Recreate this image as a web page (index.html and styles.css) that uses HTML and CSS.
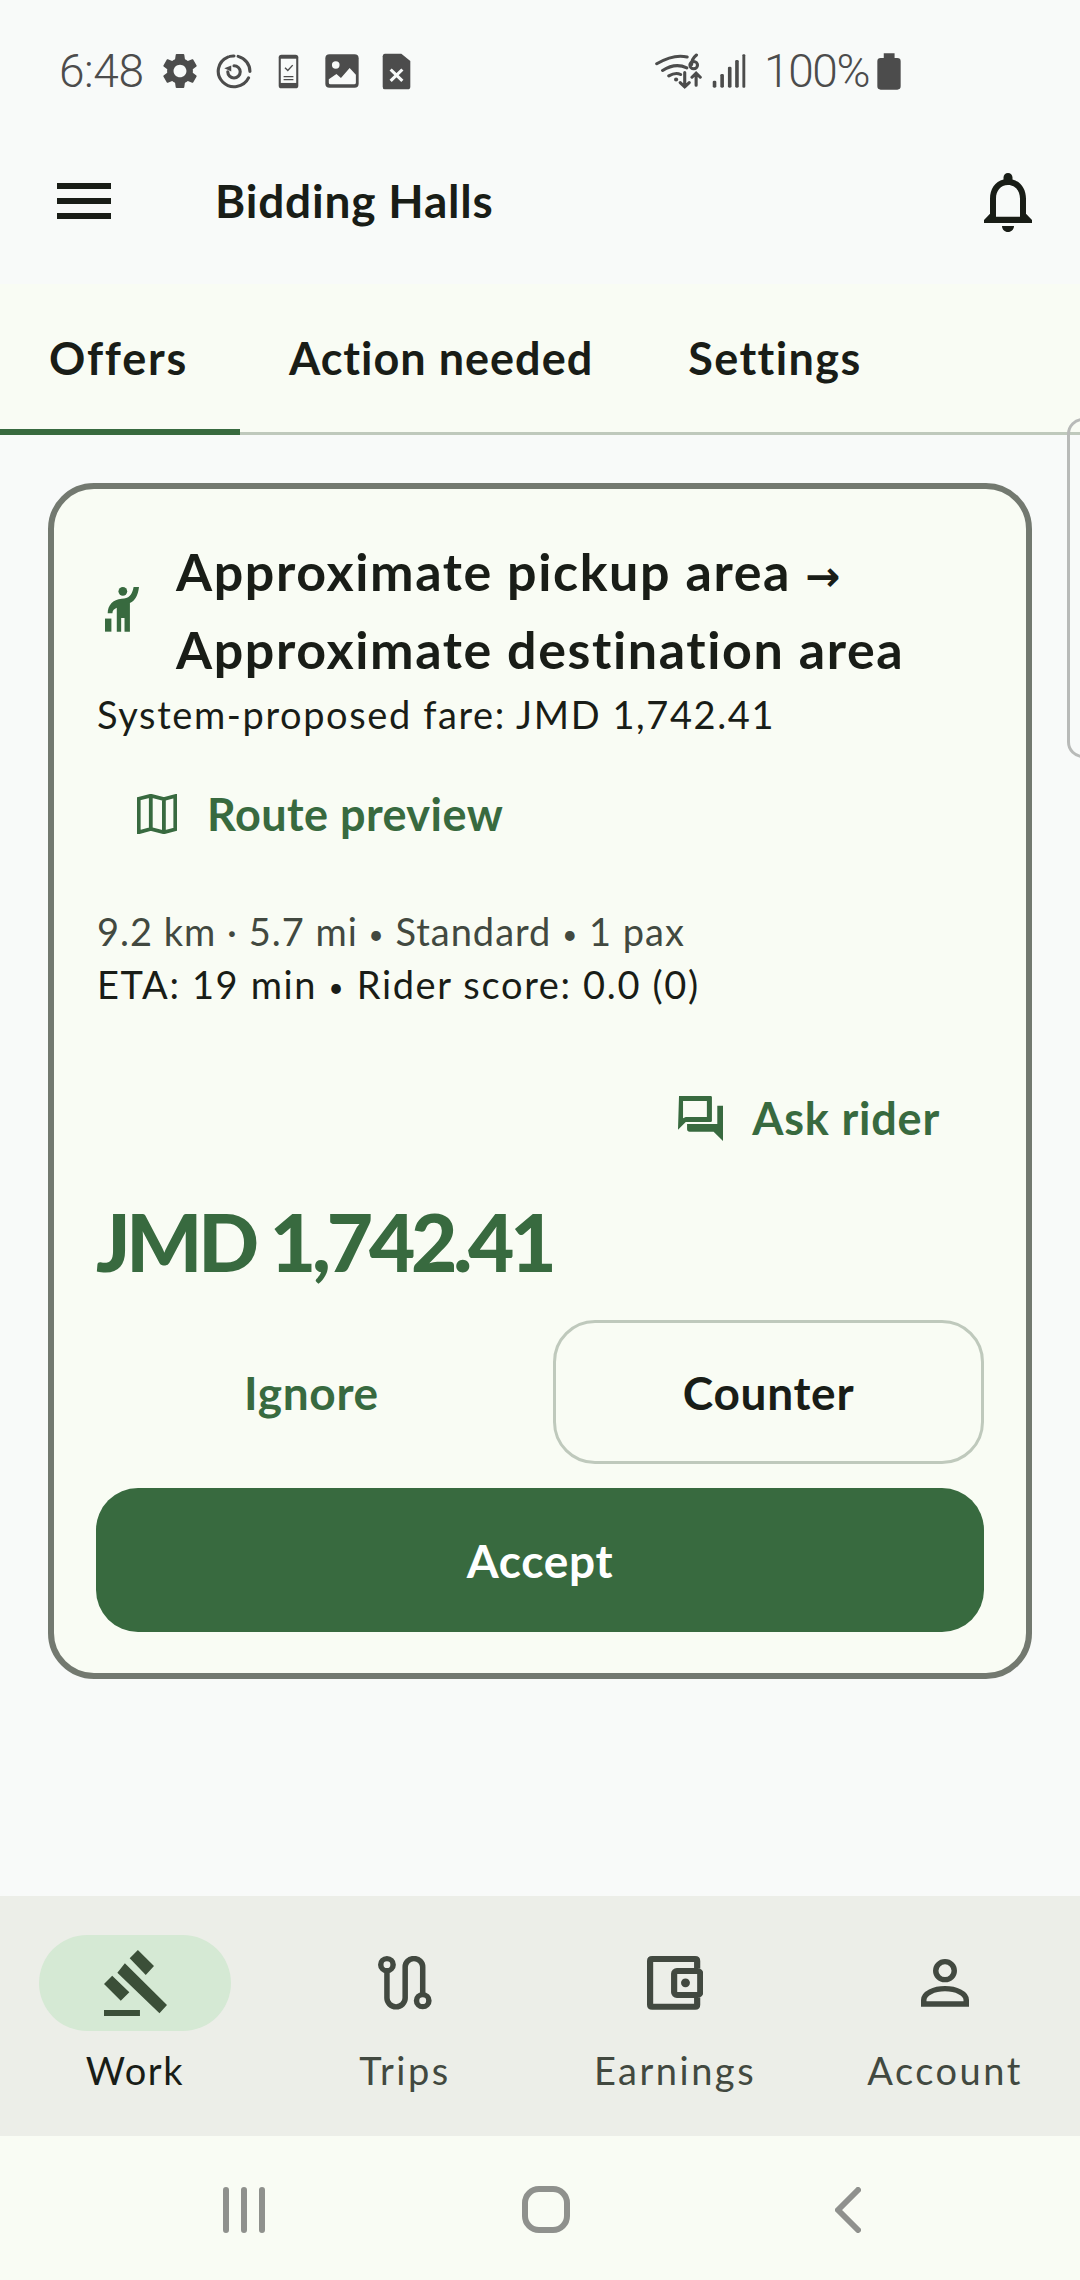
FILE: index.html
```html
<!DOCTYPE html>
<html lang="en">
<head>
<meta charset="utf-8">
<title>Bidding Halls</title>
<link rel="stylesheet" href="styles.css">
</head>
<body>
<div class="app">
  <div class="status">
    <div class="status-left">
      <span class="clock">6:48</span>
      <svg class="si gear" viewBox="2.5 1.8 19 20.4" preserveAspectRatio="none"><path class="dk" d="M19.14 12.94c.04-.3.06-.61.06-.94 0-.32-.02-.64-.07-.94l2.03-1.58c.18-.14.23-.41.12-.61l-1.92-3.32c-.12-.22-.37-.29-.59-.22l-2.39.96c-.5-.38-1.03-.7-1.62-.94l-.36-2.54c-.04-.24-.24-.41-.48-.41h-3.84c-.24 0-.43.17-.47.41l-.36 2.54c-.59.24-1.13.57-1.62.94l-2.39-.96c-.22-.08-.47 0-.59.22L2.74 8.87c-.12.21-.08.47.12.61l2.03 1.58c-.05.3-.09.63-.09.94s.02.64.07.94l-2.03 1.58c-.18.14-.23.41-.12.61l1.92 3.32c.12.22.37.29.59.22l2.39-.96c.5.38 1.03.7 1.62.94l.36 2.54c.05.24.24.41.48.41h3.84c.24 0 .44-.17.47-.41l.36-2.54c.59-.24 1.13-.56 1.62-.94l2.39.96c.22.08.47 0 .59-.22l1.92-3.32c.12-.22.07-.47-.12-.61l-2.01-1.58zM12 15.6c-1.98 0-3.6-1.62-3.6-3.6s1.62-3.6 3.6-3.6 3.6 1.62 3.6 3.6-1.62 3.6-3.6 3.6z"/></svg>
      <svg class="si sync" viewBox="628 164 104 104" preserveAspectRatio="none"><path class="ln" d="M668 171a46 46 0 0 1 12-1M692 171a46 46 0 0 1 34 45M722 235a46 46 0 1 1-60-62"/><path class="ln" d="M680 199a18 18 0 1 1-18 18"/><path class="dk" d="M652 206l20-8v18z"/></svg>
      <svg class="si phone" viewBox="806 164 60 104" preserveAspectRatio="none"><rect class="dk" x="808" y="166" width="56" height="100" rx="8"/><rect class="lt" x="814" y="178" width="44" height="72"/><path class="ln thin" d="M826 205l8 8 14-16"/><path class="ln thin" d="M822 231h28M822 240h28"/></svg>
      <svg class="si image" viewBox="944 164 98 102" preserveAspectRatio="none"><rect class="dk" x="945" y="165" width="96" height="100" rx="12"/><circle class="lt" cx="975" cy="197" r="11"/><path class="lt" d="M955 240l22-16 13 12 25-30 18 20v24q0 5-5 5h-68q-5 0-5-5z"/></svg>
      <svg class="si file" viewBox="1108 160 84 110" preserveAspectRatio="none"><path class="dk" d="M1116 162h48l26 22v76q0 8-8 8h-66q-6 0-6-8v-90q0-8 6-8z"/><path class="lnw" d="M1133 209l34 34M1167 209l-34 34"/></svg>
    </div>
    <div class="status-right">
      <svg class="si wifi" viewBox="340 160 136 110" preserveAspectRatio="none"><path class="ln" d="M345 192q50-30 88-20M362 212q36-24 70-8M380 228q20-12 34-4"/><circle class="dk" cx="401" cy="239" r="6"/><path class="ln" d="M426 218v42M413 248l13 13 13-13M459 256v-36M447 232l12-12 12 12"/><path class="ln" d="M460 166q-14 12-14 28"/><circle class="ln" cx="452" cy="196" r="11"/></svg>
      <svg class="si signal" viewBox="505 160 94 102" preserveAspectRatio="none"><rect class="dk" x="507" y="240" width="10" height="21" rx="4"/><rect class="dk" x="528" y="220" width="10" height="41" rx="4"/><rect class="dk" x="549" y="198" width="10" height="63" rx="4"/><rect class="dk" x="569" y="178" width="10" height="83" rx="4"/><rect class="dk" x="589" y="161" width="8" height="100" rx="3"/></svg>
      <span class="batt-text">100%</span>
      <svg class="si batt" viewBox="978 157 71 111" preserveAspectRatio="none"><path class="dk" d="M998 158h32v14h8q10 0 10 10v75q0 10-10 10h-49q-10 0-10-10v-75q0-10 10-10h9z"/></svg>
    </div>
  </div>

  <header class="topbar">
    <svg class="menu" viewBox="0 0 54 36"><path d="M0 0h54v6H0zM0 15h54v6H0zM0 30h54v6H0z"/></svg>
    <h1 class="title">Bidding Halls</h1>
    <svg class="bell" viewBox="4 2.5 16 19.5" preserveAspectRatio="none"><path d="M12 22c1.1 0 2-.9 2-2h-4c0 1.1.9 2 2 2zm6-6v-5c0-3.07-1.63-5.64-4.5-6.32V4c0-.83-.67-1.5-1.5-1.5s-1.5.67-1.5 1.5v.68C7.64 5.36 6 7.92 6 11v5l-2 2v1h16v-1l-2-2zm-2 1H8v-6c0-2.48 1.51-4.5 4-4.5s4 2.02 4 4.5v6z"/></svg>
  </header>

  <nav class="tabs">
    <div class="tab active">Offers</div>
    <div class="tab">Action needed</div>
    <div class="tab">Settings</div>
  </nav>

  <div class="peek"></div>

  <main class="content">
    <article class="card">
      <div class="route">
        <svg class="hail" viewBox="75 170 101 134" preserveAspectRatio="none"><circle cx="128" cy="183" r="13"/><path d="M83 248C83 225 98 207 125 205C145 205 155 195 160 170H176C173 195 165 210 149 218V303H133V262H123V303H110V232C103 235 97 240 97 248Z"/><rect x="75" y="264" width="19" height="39"/></svg>
        <h2 class="route-title">Approximate pickup area <span class="arrow">→</span><br>Approximate destination area</h2>
      </div>
      <p class="fare">System-proposed fare: JMD 1,742.41</p>
      <div class="preview">
        <svg class="map" viewBox="397 98 116 120" preserveAspectRatio="none"><path d="M402 112L437 103L475 113L508 104V204L475 213L437 203L402 213ZM437 103V203M475 113V213"/></svg>
        <span class="link">Route preview</span>
      </div>
      <div class="stats">
        <p class="muted">9.2 km · 5.7 mi <span class="dot">•</span> Standard <span class="dot">•</span> 1 pax</p>
        <p class="strong">ETA: 19 min <span class="dot">•</span> Rider score: 0.0 (0)</p>
      </div>
      <div class="ask">
        <svg class="chat" viewBox="173 108 134 135" preserveAspectRatio="none"><path fill-rule="evenodd" d="M176 108H270q4 0 4 4V182q0 4-4 4H196L173 209ZM188 123V175l8-4H259V123Z"/><path d="M290 137h17v106l-28-28h-71q-8 0-8-8v-15h90z"/></svg>
        <span class="link">Ask rider</span>
      </div>
      <div class="price">JMD 1,742.41</div>
      <div class="actions">
        <button class="btn ghost">Ignore</button>
        <button class="btn outline">Counter</button>
      </div>
      <button class="btn primary">Accept</button>
    </article>
  </main>

  <nav class="bottom">
    <div class="item on">
      <div class="pill">
        <svg class="nav-ic gavel" viewBox="296 210 184 198" preserveAspectRatio="none"><path d="M357 250l123 125-22 25-123-122zM395 210l47 48-24 27-47-50zM320 287l50 50-25 25-49-50zM296 390h105v18H296z"/></svg>
      </div>
      <span class="lab">Work</span>
    </div>
    <div class="item">
      <div class="pill">
        <svg class="nav-ic line trips" viewBox="1098 228 157 162" preserveAspectRatio="none"><circle cx="1124" cy="254" r="18"/><circle cx="1228" cy="362" r="18"/><path d="M1124 272v82a26 26 0 0 0 53 0v-93a25 25 0 0 1 51 0v83"/></svg>
      </div>
      <span class="lab">Trips</span>
    </div>
    <div class="item">
      <div class="pill">
        <svg class="nav-ic wallet" viewBox="315 228 163 161" preserveAspectRatio="none"><path class="line-p" d="M461 265v-22q0-6-6-6H330q-6 0-6 6v130q0 6 6 6h125q6 0 6-6v-21"/><rect class="line-p" x="394" y="273" width="76" height="71" rx="8"/><circle cx="427" cy="308" r="13"/></svg>
      </div>
      <span class="lab">Earnings</span>
    </div>
    <div class="item">
      <div class="pill">
        <svg class="nav-ic line account" viewBox="1106 237 140 144" preserveAspectRatio="none"><circle cx="1176" cy="272" r="27"/><path d="M1114 372v-12c0-20 30-34 62-34s62 14 62 34v12z"/></svg>
      </div>
      <span class="lab">Account</span>
    </div>
  </nav>

  <div class="sysnav">
    <svg class="sys recents" viewBox="0 0 42 46"><path d="M3 3v40M21 3v40M39 3v40"/></svg>
    <svg class="sys home" viewBox="0 0 48 47"><rect x="3" y="3" width="42" height="41" rx="14"/></svg>
    <svg class="sys back" viewBox="0 0 26 46"><path d="M23 3L3 23l20 20"/></svg>
  </div>
</div>
</body>
</html>
```
FILE: styles.css
```css
* { box-sizing: border-box; }
html, body { margin: 0; padding: 0; }
body { font-family: "Lato", "Noto Sans", sans-serif; color: #191d17; background: #f8faf9; }
h1, h2, p { margin: 0; font-weight: inherit; font-size: inherit; }
button { font: inherit; background: none; border: 0; padding: 0; margin: 0; color: inherit; }
.app { position: relative; width: 1080px; height: 2280px; display: flex; flex-direction: column; overflow: hidden; background: #f8faf9; }

/* status bar */
.status { height: 124px; padding: 52px 179px 0 59px; display: flex; justify-content: space-between; align-items: flex-start; color: #4c4c4c; }
.status-left, .status-right { display: flex; align-items: center; height: 38px; }
.clock { font-family: "Roboto", sans-serif; font-weight: 300; font-size: 46px; line-height: 38px; width: 104px; letter-spacing: -.4px; }
.batt-text { font-family: "Roboto", sans-serif; font-weight: 300; font-size: 46px; line-height: 38px; margin: 0 8px 0 18px; letter-spacing: -1.4px; }
.si { display: block; flex: none; }
.dk { fill: #4c4c4c; }
.lt { fill: #f8faf9; }
.ln { fill: none; stroke: #4c4c4c; stroke-width: 9; stroke-linecap: round; }
.ln.thin { stroke-width: 4; stroke-linecap: butt; }
.lnw { fill: none; stroke: #f8faf9; stroke-width: 9; }
.gear { width: 34px; height: 36px; }
.sync { width: 36px; height: 35px; margin-left: 19px; }
.phone { width: 21px; height: 35px; margin-left: 26px; }
.image { width: 34px; height: 34px; margin-left: 26px; }
.file { width: 29px; height: 37px; margin-left: 23px; }
.wifi { width: 47px; height: 37px; }
.signal { width: 34px; height: 34px; margin-left: 10px; }
.batt { width: 24px; height: 37px; }

/* top bar */
.topbar { height: 160px; padding: 0 48px 6px 57px; display: flex; align-items: center; }
.menu { width: 54px; height: 36px; fill: #191d17; flex: none; }
.title { margin-left: 104px; flex: 1; font-size: 46px; font-weight: 700; line-height: 60px; letter-spacing: .8px; }
.bell { width: 48px; height: 59px; fill: #191d17; flex: none; margin-top: 2px; }

/* tabs */
.tabs { height: 151px; display: flex; background: #f9fcf4; border-bottom: 3px solid #bfc9bc; }
.tab { position: relative; padding: 0 49px; font-size: 45px; font-weight: 700; line-height: 148px; height: 151px; margin-bottom: -3px; letter-spacing: 1px; white-space: nowrap; }
.tab.active { width: 240px; padding-right: 0; letter-spacing: 1.8px; }
.tab:last-child { letter-spacing: 1.4px; padding-left: 46px; }
.tab.active::after { content: ""; position: absolute; left: 0; right: 0; bottom: 0; height: 6px; background: #386a3f; }

.peek { position: absolute; left: 1067px; top: 418px; width: 60px; height: 340px; border: 3px solid #b8bab8; border-radius: 16px; }

/* card */
.content { flex: 1; padding: 48px 48px 0 48px; }
.card { height: 1196px; border: 6px solid #737970; border-radius: 46px; background: #f9fcf4; padding: 43px 42px 41px 42px; display: flex; flex-direction: column; }
.route { display: flex; align-items: center; height: 156px; }
.hail { width: 34px; height: 45px; fill: #386a3f; margin-left: 9px; flex: none; margin-top: -2px; }
.route-title { margin-left: 37px; font-size: 52px; font-weight: 700; line-height: 78px; white-space: nowrap; letter-spacing: 1.6px; }
.arrow { font-family: "DejaVu Sans", sans-serif; font-weight: 700; font-size: 42px; letter-spacing: 0; line-height: 0; }
.fare { font-size: 38px; line-height: 52px; letter-spacing: 1.6px; margin-left: 1px; }
.preview { display: flex; align-items: center; height: 121px; margin-left: 41px; margin-top: 11px; padding-top: 4px; }
.map { width: 40px; height: 40px; flex: none; fill: none; stroke: #386a3f; stroke-width: 11; }
.link { color: #386a3f; font-size: 45px; font-weight: 700; line-height: 60px; letter-spacing: .45px; }
.preview .link { margin-left: 30px; }
.stats { margin-top: 33px; margin-left: 1px; font-size: 38px; line-height: 53px; letter-spacing: 1px; }
.dot { font-size: 26px; position: relative; top: -2px; line-height: 0; }
.muted { color: #424940; }
.strong { letter-spacing: 1.65px; }
.ask { display: flex; align-items: center; justify-content: flex-end; height: 100px; margin-top: 57px; padding-right: 44px; }
.chat { width: 45px; height: 45px; flex: none; fill: #386a3f; }
.ask .link { margin-left: 29px; letter-spacing: .8px; }
.price { color: #386a3f; font-size: 80px; font-weight: 900; line-height: 100px; margin-top: 23px; margin-left: 0; letter-spacing: -4.2px; }
.actions { display: flex; gap: 26px; margin-top: 29px; height: 144px; }
.btn { display: flex; align-items: center; justify-content: center; font-size: 46px; font-weight: 700; height: 144px; border-radius: 42px; letter-spacing: .7px; }
.ghost { width: 431px; color: #386a3f; }
.outline { width: 431px; border: 3px solid #bfc9bc; }
.primary { width: 888px; margin-top: 24px; background: #386a3f; color: #fff; flex: none; }

/* bottom nav */
.bottom { height: 240px; background: #eceee8; display: grid; grid-template-columns: repeat(4, 270px); padding-top: 39px; flex: none; }
.item { display: flex; flex-direction: column; align-items: center; color: #424940; }
.item.on { color: #191d17; }
.pill { width: 192px; height: 96px; border-radius: 48px; display: flex; align-items: center; justify-content: center; margin-bottom: 14px; }
.on .pill { background: #d5e9d4; }
.nav-ic { display: block; }
.gavel { width: 63px; height: 66px; fill: #3b4f38; }
.line { fill: none; stroke: #424940; stroke-width: 16; }
.trips { width: 54px; height: 54px; }
.account { width: 48px; height: 48px; }
.wallet { width: 56px; height: 54px; fill: #424940; }
.line-p { fill: none; stroke: #424940; stroke-width: 18; }
.lab { font-size: 38px; line-height: 50px; letter-spacing: 2.5px; }
.on .lab { letter-spacing: 1.6px; }

/* system nav */
.sysnav { height: 144px; background: #f9fcf4; display: flex; align-items: center; padding: 3px 0 0 223px; flex: none; }
.sys { display: block; fill: none; stroke: #8f918d; stroke-width: 6; stroke-linecap: round; stroke-linejoin: round; flex: none; }
.recents { width: 42px; height: 46px; }
.home { width: 48px; height: 47px; margin-left: 257px; }
.back { width: 26px; height: 46px; margin-left: 265px; }
```
